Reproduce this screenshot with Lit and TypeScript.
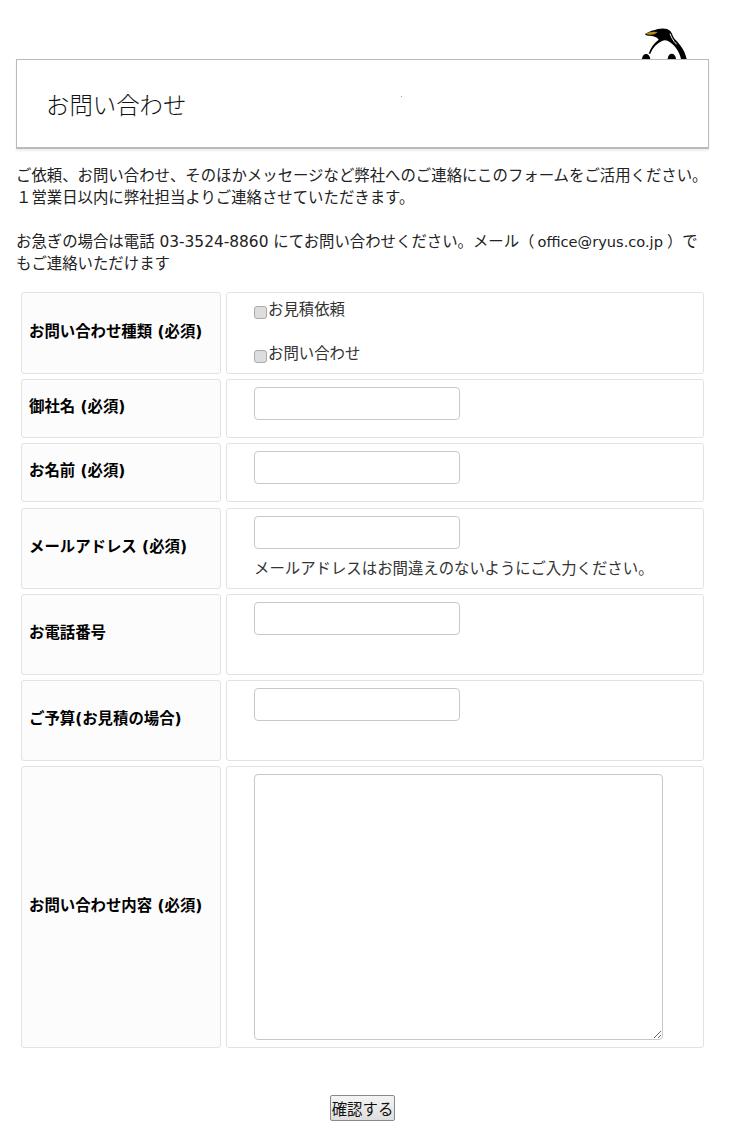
import { LitElement, html, css, svg } from "lit";
import { customElement } from "lit/decorators.js";

const penguin = svg`<svg class="peng" width="47" height="33" viewBox="125 50 141 99">
  <path fill="#000" d="M137 71 C150 62 165 60 175 56 C188 53 205 53 213 62 C219 70 220 78 226 86 C240 100 256 118 262 146 L245 146 C240 125 228 106 212 96 C205 90 196 88 188 92 C172 100 160 112 153 130 L148 130 C154 112 164 98 178 88 C174 80 160 76 147 76 C142 76 138 74 137 71 Z"/>
  <path fill="#b58a16" d="M139 70 C148 65 162 63 175 65 C170 70 164 73 155 73 C148 73 142 72 139 70 Z"/>
  <path fill="none" stroke="#fff" stroke-width="3" d="M212 70 C216 80 220 90 232 102"/>
  <path fill="#000" d="M128 146 C129 136 134 131 140 131 C147 131 152 137 153 146 Z"/>
  <path fill="#000" d="M205 146 C206 135 211 130 217 130 C224 130 229 136 230 146 Z"/>
</svg>`;

@customElement("app-root")
export class AppRoot extends LitElement {
  static styles = css`
    :host { display: block; height: 1140px; box-sizing: border-box; padding: 59px 22px 0 16px; background: #fff; color: #333;
      font: 15.4px/22px "DejaVu Sans", "Noto Sans CJK JP", sans-serif; overflow: hidden; }
    .head { position: relative; height: 90px; box-sizing: border-box; border: 1px solid #bbb; border-bottom-width: 2px; box-shadow: 0 2px 2px #eee;
      display: flex; align-items: center; padding: 0 30px 0 29px; font: 300 23.4px "Noto Sans CJK JP", sans-serif; color: #111; }
    .peng { position: absolute; left: 624px; top: -33px; }
    .dot { position: absolute; left: 384px; top: 36px; width: 1px; height: 1px; background: #999; }
    .intro { margin: 16px 0 17px; color: #222; }
    .intro p { margin: 0; }
    .intro p + p { margin-top: 22px; }
    .mail { font-size: 14.6px; margin: 0 4px 0 3px; }
    .grid { display: grid; grid-template-columns: 200px 478px; grid-template-rows: 82px 59px 59px 81px 81px 81px 282px; gap: 5.2px 5px; margin-left: 5px; }
    .l, .r { box-sizing: border-box; border: 1px solid #e2e2e2; border-radius: 3px; }
    .l { background: #fcfcfc; display: flex; align-items: center; padding: 0 7px 3px; font-weight: 700; color: #000; }
    .r { padding: 7px 27px; }
    .check { display: flex; align-items: center; height: 22px; margin-bottom: 22px; position: relative; top: -1px; }
    .check:last-child { margin-bottom: 0; }
    .box { width: 13px; height: 13px; box-sizing: border-box; margin: 4px 1px 0 0; border: 1px solid #aaa; border-radius: 3px; background: #ddd; }
    .input { display: block; width: 206px; height: 33px; box-sizing: border-box; border: 1px solid #c8c8c8; border-radius: 4px; background: #fff; }
    .note { margin-top: 9px; }
    .area { position: relative; width: 409px; height: 266px; box-sizing: border-box; border: 1px solid #c8c8c8; border-radius: 4px; }
    .grip { position: absolute; right: 0; bottom: 0; }
    .foot { display: flex; margin: 47px 0 0; padding-left: 314px; }
    .btn { width: 65px; height: 26px; box-sizing: border-box; border: 1px solid #8a8a8a; border-radius: 2px; background: linear-gradient(#f4f4f4, #dedede);
      color: #111; font: 15.4px/24px "Noto Sans CJK JP", sans-serif; text-align: center; padding: 0; }
  `;

  row(label: string, body: unknown) {
    return html`<div class="l">${label}</div><div class="r">${body}</div>`;
  }

  render() {
    const input = html`<div class="input"></div>`;
    return html`
      <div class="head">お問い合わせ${penguin}<span class="dot"></span></div>
      <div class="intro">
        <p>ご依頼、お問い合わせ、そのほかメッセージなど弊社へのご連絡にこのフォームをご活用ください。<br>１営業日以内に弊社担当よりご連絡させていただきます。</p>
        <p>お急ぎの場合は電話 03-3524-8860 にてお問い合わせください。メール（<span class="mail">office@ryus.co.jp</span>）で<br>もご連絡いただけます</p>
      </div>
      <div class="grid">
        ${this.row("お問い合わせ種類 (必須)", html`
          <div class="check"><span class="box"></span>お見積依頼</div>
          <div class="check"><span class="box"></span>お問い合わせ</div>`)}
        ${this.row("御社名 (必須)", input)}
        ${this.row("お名前 (必須)", input)}
        ${this.row("メールアドレス (必須)", html`${input}<div class="note">メールアドレスはお間違えのないようにご入力ください。</div>`)}
        ${this.row("お電話番号", input)}
        ${this.row("ご予算(お見積の場合)", input)}
        ${this.row("お問い合わせ内容 (必須)", html`<div class="area">
          <svg class="grip" width="9" height="9" viewBox="0 0 9 9"><path d="M1 8 L8 1 M5 8 L8 5" stroke="#666" fill="none"/></svg></div>`)}
      </div>
      <div class="foot"><button class="btn">確認する</button></div>
    `;
  }
}
